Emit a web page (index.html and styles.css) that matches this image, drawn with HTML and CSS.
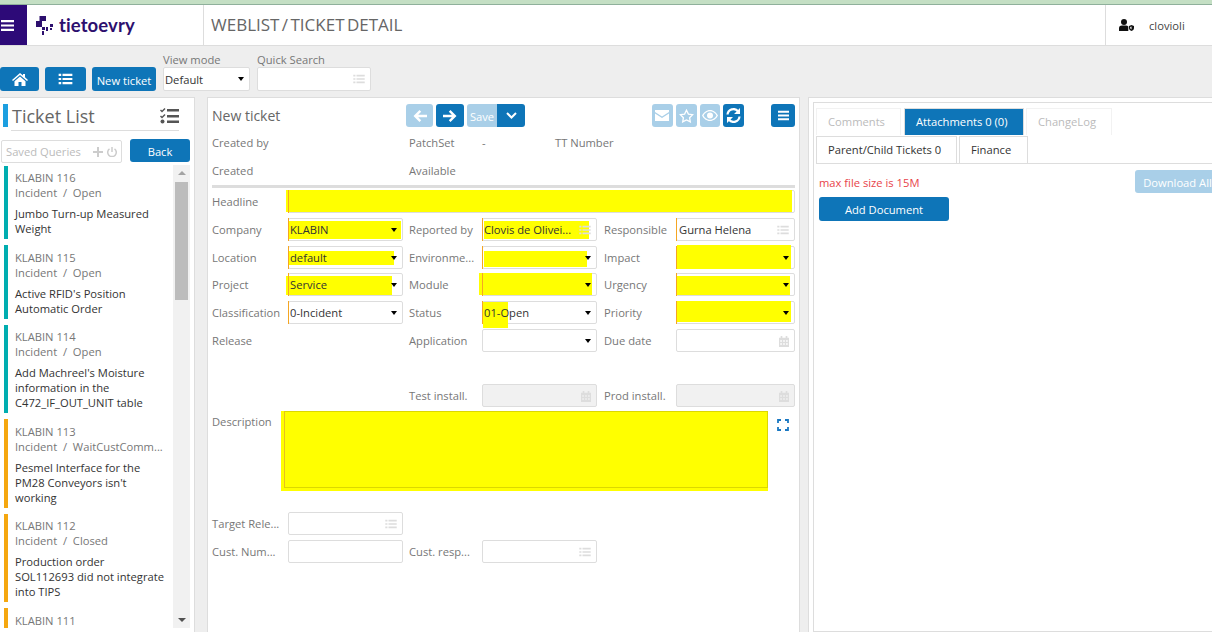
FILE: index.html
```html
<!DOCTYPE html>
<html>

<head>
  <title>Weblist - Ticket detail</title>
  <link rel="stylesheet" href="styles.css">
</head>

<body>
  <svg class="defs" width="0" height="0">
    <symbol id="i-bars" viewBox="0 0 16 14"><path d="M1 1h14v2.400H1zM1 5.800h14v2.400H1zM1 10.600h14V13H1z" fill="currentColor"/></symbol>
    <symbol id="i-list" viewBox="0 0 16 14"><path d="M0 1h3v2.400H0zM4.500 1H16v2.400H4.500zM0 5.800h3v2.400H0zM4.500 5.800H16v2.400H4.500zM0 10.600h3V13H0zM4.500 10.600H16V13H4.500z" fill="currentColor"/></symbol>
    <symbol id="i-cal" viewBox="0 0 12 13"><path d="M2 0h2v2h4V0h2v2h2v11H0V2h2zM1.500 5v1.800h2V5zM5 5v1.800h2V5zM8.500 5v1.800h2V5zM1.500 8.500v1.800h2V8.500zM5 8.500v1.800h2V8.500zM8.500 8.500v1.800h2V8.500z" fill="currentColor" fill-rule="evenodd"/></symbol>
  </svg>

  <div class="strip"></div>

  <header class="topbar">
    <div class="burger"><svg width="15" height="13"><use href="#i-bars"/></svg></div>
    <div class="logo">
      <svg width="17" height="19" viewBox="0 0 17 19">
        <path d="M3.500 0H10v5H6v6H0V5h3.500zM6 11h3v3H6zM6 15h2v4H6zM10 11h2v4h-2zM14 8h3v3h-3zM14 12h2v2h-2z" fill="#2d0f6e"/>
      </svg>
      <span class="logo-text">tietoevry</span>
    </div>
    <div class="page-title">WEBLIST / TICKET DETAIL</div>
    <div class="user">
      <svg width="15" height="12" viewBox="0 0 15 12">
        <circle cx="5" cy="3" r="3" fill="#111"/>
        <path d="M0 12V9c0-1.700 1.300-2.500 3-2.500h4c1 0 1.800.3 2.300.9V12z" fill="#111"/>
        <path d="M10 7l2.500-1L15 7v2c0 1.500-1.200 2.500-2.500 3C11.200 11.500 10 10.500 10 9z" fill="#111"/>
        <path d="M12.500 7.500v3c-.8-.4-1.300-1-1.300-1.700V8z" fill="#fff"/>
      </svg>
      <span>clovioli</span>
    </div>
  </header>

  <div class="toolbar">
    <button class="btn btn-home">
      <svg width="16" height="13" viewBox="0 0 16 13"><path d="M8 0l3 2.500V1h2v3.200L16 7l-1 1-7-6-7 6-1-1zM8 3.500l5.500 4.700V13H9.500V9h-3v4h-4V8.200z" fill="#fff"/></svg>
    </button>
    <button class="btn btn-list"><svg width="15" height="12"><use href="#i-list"/></svg></button>
    <button class="btn btn-new">New ticket</button>
    <div class="tool-field view-mode">
      <label>View mode</label>
      <div class="field">
        <span class="value">Default</span><i class="caret"></i>
      </div>
    </div>
    <div class="tool-field quick-search">
      <label>Quick Search</label>
      <div class="field"><svg class="field-icon" width="12" height="10"><use href="#i-list"/></svg></div>
    </div>
  </div>

  <main class="content">
    <aside class="list-panel">
      <div class="list-head">
        <h2>Ticket List</h2>
        <svg class="tasks-icon" width="19" height="16" viewBox="0 0 19 16">
          <path d="M0 2.500l1 -1 1 1L4.500 0l1 1L2 4.500zM0 8.500l1-1 1 1L4.500 6l1 1L2 10.500z" fill="#555"/>
          <circle cx="2.500" cy="13.500" r="2" fill="#555"/>
          <path d="M7 1h12v2.600H7zM7 7h12v2.600H7zM7 12.500h12v2.600H7z" fill="#555"/>
        </svg>
      </div>
      <div class="query-row">
        <div class="query-input">
          <span>Saved Queries</span>
          <svg width="24" height="10" viewBox="0 0 24 10">
            <path d="M0 4h4V0h2v4h4v2H6v4H4V6H0z" fill="#ccc"/>
            <path d="M19 0v5" stroke="#ccc" stroke-width="1.500"/>
            <path d="M16.500 1.800a4.300 4.300 0 1 0 5 0" fill="none" stroke="#ccc" stroke-width="1.500"/>
          </svg>
        </div>
        <button class="btn btn-back">Back</button>
      </div>
      <div class="list-body">
        <div class="tickets">
          <div class="ticket open">
            <div class="ticket-id">KLABIN 116</div>
            <div class="ticket-state">Incident &nbsp;/&nbsp; Open</div>
            <div class="ticket-text">Jumbo Turn-up Measured<br>Weight</div>
          </div>
          <div class="ticket open">
            <div class="ticket-id">KLABIN 115</div>
            <div class="ticket-state">Incident &nbsp;/&nbsp; Open</div>
            <div class="ticket-text">Active RFID's Position<br>Automatic Order</div>
          </div>
          <div class="ticket open">
            <div class="ticket-id">KLABIN 114</div>
            <div class="ticket-state">Incident &nbsp;/&nbsp; Open</div>
            <div class="ticket-text">Add Machreel's Moisture<br>information in the<br>C472_IF_OUT_UNIT table</div>
          </div>
          <div class="ticket waiting">
            <div class="ticket-id">KLABIN 113</div>
            <div class="ticket-state">Incident &nbsp;/&nbsp; WaitCustComm...</div>
            <div class="ticket-text">Pesmel Interface for the<br>PM28 Conveyors isn't<br>working</div>
          </div>
          <div class="ticket waiting">
            <div class="ticket-id">KLABIN 112</div>
            <div class="ticket-state">Incident &nbsp;/&nbsp; Closed</div>
            <div class="ticket-text">Production order<br>SOL112693 did not integrate<br>into TIPS</div>
          </div>
          <div class="ticket waiting">
            <div class="ticket-id">KLABIN 111</div>
          </div>
        </div>
        <div class="scrollbar">
          <i class="arrow-up"></i>
          <div class="thumb"></div>
          <i class="arrow-down"></i>
        </div>
      </div>
    </aside>

    <section class="detail-panel">
      <div class="detail-head">
        <h3>New ticket</h3>
        <div class="detail-nav">
          <button class="btn btn-back-nav light">
            <svg width="14" height="12" viewBox="0 0 14 12"><path d="M6.500 0l1.700 1.700L5.200 4.700H14v2.600H5.200l3 3L6.500 12 .5 6z" fill="#fff"/></svg>
          </button>
          <button class="btn btn-next-nav">
            <svg width="14" height="12" viewBox="0 0 14 12"><path d="M7.500 0L5.800 1.700l3 3H0v2.600h8.800l-3 3L7.500 12l6-6z" fill="#fff"/></svg>
          </button>
          <div class="save-group">
            <button class="btn btn-save light">Save</button>
            <button class="btn btn-drop">
              <svg width="11" height="7" viewBox="0 0 11 7"><path d="M1 1l4.500 4.500L10 1" fill="none" stroke="#fff" stroke-width="2"/></svg>
            </button>
          </div>
        </div>
        <div class="detail-actions">
          <button class="btn btn-act light">
            <svg width="14" height="11" viewBox="0 0 14 11"><path d="M0 0h14v2L7 6.500 0 2zM0 3.500L7 8l7-4.500V11H0z" fill="#fff"/></svg>
          </button>
          <button class="btn btn-act light">
            <svg width="15" height="14" viewBox="0 0 15 14"><path d="M7.500 1.200l1.900 3.900 4.200.6-3 3 .7 4.200-3.800-2-3.800 2 .7-4.200-3-3 4.200-.6z" fill="none" stroke="#fff" stroke-width="1.300"/></svg>
          </button>
          <button class="btn btn-act light">
            <svg width="16" height="11" viewBox="0 0 16 11"><path d="M8 0c3.500 0 6.500 2.500 8 5.500-1.500 3-4.500 5.500-8 5.500S1.500 8.500 0 5.500C1.500 2.500 4.500 0 8 0zm0 1.200c-2.800 0-5.200 1.900-6.500 4.300 1.300 2.400 3.700 4.300 6.500 4.300s5.200-1.900 6.500-4.300C13.200 3.100 10.800 1.200 8 1.200zM8 2.500a3 3 0 1 1 0 6 3 3 0 0 1 0-6z" fill="#fff"/></svg>
          </button>
          <button class="btn btn-act">
            <svg width="15" height="15" viewBox="0 0 15 15">
              <path d="M1.500 6.500A6 6 0 0 1 12 3.200" fill="none" stroke="#fff" stroke-width="2.200"/>
              <path d="M13.500 8.500A6 6 0 0 1 3 11.800" fill="none" stroke="#fff" stroke-width="2.200"/>
              <path d="M14 0v6H8zM1 15V9h6z" fill="#fff"/>
            </svg>
          </button>
          <button class="btn btn-menu"><svg width="13" height="11"><use href="#i-bars"/></svg></button>
        </div>
      </div>

      <div class="meta">
        <span>Created by</span><span></span><span>PatchSet</span><span>-</span><span>TT Number</span>
      </div>
      <div class="meta meta-last">
        <span>Created</span><span></span><span>Available</span>
      </div>
      <div class="rule"></div>

      <div class="form-grid">
        <label>Headline</label>
        <div class="field wide req"><span class="mark m-headline"></span></div>

        <label>Company</label>
        <div class="field req"><span class="mark m-company"></span><span class="value">KLABIN</span><i class="caret"></i></div>
        <label class="gap">Reported by</label>
        <div class="field req"><span class="mark m-reported"></span><span class="value">Clovis de Olivei...</span><svg class="field-icon" width="12" height="10"><use href="#i-list"/></svg></div>
        <label class="gap-last">Responsible</label>
        <div class="field req"><span class="value value-last">Gurna Helena</span><svg class="field-icon" width="12" height="10"><use href="#i-list"/></svg></div>

        <label>Location</label>
        <div class="field req"><span class="mark m-location"></span><span class="value">default</span><i class="caret"></i></div>
        <label class="gap">Environme...</label>
        <div class="field req"><span class="mark m-environment"></span><i class="caret"></i></div>
        <label class="gap-last">Impact</label>
        <div class="field req"><span class="mark m-impact"></span><i class="caret"></i></div>

        <label>Project</label>
        <div class="field req"><span class="mark m-project"></span><span class="value">Service</span><i class="caret"></i></div>
        <label class="gap">Module</label>
        <div class="field req"><span class="mark m-module"></span><i class="caret"></i></div>
        <label class="gap-last">Urgency</label>
        <div class="field req"><span class="mark m-urgency"></span><i class="caret"></i></div>

        <label>Classification</label>
        <div class="field req"><span class="value">0-Incident</span><i class="caret"></i></div>
        <label class="gap">Status</label>
        <div class="field req"><span class="mark m-status"></span><span class="value">01-Open</span><i class="caret"></i></div>
        <label class="gap-last">Priority</label>
        <div class="field req"><span class="mark m-priority"></span><i class="caret"></i></div>

        <label>Release</label>
        <div></div>
        <label class="gap">Application</label>
        <div class="field"><i class="caret"></i></div>
        <label class="gap-last">Due date</label>
        <div class="field"><svg class="field-icon" width="10" height="11"><use href="#i-cal"/></svg></div>

        <div class="spacer"></div>

        <div></div>
        <div></div>
        <label class="gap">Test install.</label>
        <div class="field off"><svg class="field-icon" width="10" height="11"><use href="#i-cal"/></svg></div>
        <label class="gap-last">Prod install.</label>
        <div class="field off"><svg class="field-icon" width="10" height="11"><use href="#i-cal"/></svg></div>
      </div>

      <div class="desc-row">
        <label>Description</label>
        <div class="desc-box"></div>
        <svg class="expand" width="12" height="12" viewBox="0 0 12 12">
          <path d="M1 4V1h3M8 1h3v3M11 8v3H8M4 11H1V8" fill="none" stroke="#1a78c2" stroke-width="1.800"/>
        </svg>
      </div>

      <div class="form-grid form-bottom">
        <label>Target Rele...</label>
        <div class="field"><svg class="field-icon" width="12" height="10"><use href="#i-list"/></svg></div>
        <div></div>
        <div></div>
        <div></div>
        <div></div>

        <label>Cust. Num...</label>
        <div class="field"></div>
        <label class="gap">Cust. resp...</label>
        <div class="field"><svg class="field-icon" width="12" height="10"><use href="#i-list"/></svg></div>
      </div>
    </section>

    <section class="side-panel">
      <div class="side-inner">
        <div class="tabs">
          <a class="tab muted t-comments">Comments</a>
          <a class="tab active t-attach">Attachments 0 (0)</a>
          <a class="tab muted t-log">ChangeLog</a>
        </div>
        <div class="tabs tabs-second">
          <a class="tab t-parent">Parent/Child Tickets 0</a>
          <a class="tab t-finance">Finance</a>
        </div>
        <div class="attach-head">
          <span class="max-size">max file size is 15M</span>
          <button class="btn btn-download light">Download All</button>
        </div>
        <button class="btn btn-add">Add Document</button>
      </div>
    </section>
  </main>
</body>

</html>
```

FILE: styles.css
```css
* {
  box-sizing: border-box;
}

html,
body {
  height: 632px;
  overflow: hidden;
}

body {
  margin: 0;
  display: flex;
  flex-direction: column;
  background: #eeeeee;
  color: #777;
  font-family: "Open Sans", sans-serif;
  font-size: 11.200px;
  line-height: 15px;
}

.defs {
  position: absolute;
}

label {
  display: block;
}

.strip {
  height: 5px;
  flex: none;
  background: #c4dfc4;
  border-bottom: 1px solid #8fb09b;
}

.topbar {
  height: 41px;
  flex: none;
  display: flex;
  background: #fff;
  border-bottom: 1px solid #ddd;
}

.burger {
  width: 27px;
  background: #2d0a78;
  color: #fff;
  display: flex;
  align-items: center;
}

.logo {
  width: 177px;
  display: flex;
  align-items: center;
  gap: 6px;
  padding-left: 9px;
  border-right: 1px solid #ddd;
}

.logo-text {
  color: #2d0f6e;
  font-family: "Lato", sans-serif;
  font-size: 18.500px;
  font-weight: 700;
  letter-spacing: 0.100px;
}

.page-title {
  flex: 1;
  padding-left: 7px;
  color: #666;
  font-size: 17px;
  line-height: 40px;
  word-spacing: -2px;
}

.user {
  width: 107px;
  display: flex;
  align-items: center;
  gap: 15px;
  padding-left: 13px;
  border-left: 1px solid #ddd;
  color: #444;
}

.toolbar {
  height: 51px;
  flex: none;
  display: flex;
  align-items: flex-end;
  padding-bottom: 6px;
}

.btn {
  border: 0;
  padding: 0;
  background: #0e75b8;
  color: #fff;
  font-family: "Open Sans", sans-serif;
  font-size: 11.200px;
  border-radius: 3px;
  display: flex;
  align-items: center;
  justify-content: center;
}

.btn.light {
  background: #a9cfe8;
}

.btn-home {
  width: 39px;
  height: 24px;
}

.btn-list {
  width: 41px;
  height: 24px;
  margin-left: 6px;
}

.btn-new {
  width: 64px;
  height: 24px;
  margin-left: 6px;
  padding-top: 3px;
}

.tool-field label {
  line-height: 14px;
}

.tool-field .field {
  line-height: 24px;
}

.view-mode {
  width: 87px;
  margin-left: 7px;
}

.quick-search {
  width: 114px;
  margin-left: 7px;
}

.field {
  position: relative;
  height: 24px;
  background: #fff;
  border: 1px solid #ddd;
  border-radius: 2px;
  color: #333;
  line-height: 22px;
}

/* mandatory fields get an orange edge, it stays visible over the marks */
.field.req::after {
  content: "";
  position: absolute;
  left: -1px;
  top: -1px;
  bottom: -1px;
  width: 1px;
  background: #f5a623;
}

.field.off {
  background: #f1f1f1;
}

.field.wide {
  grid-column: 2 / 7;
}

.value {
  position: relative;
  padding-left: 1px;
}

.value-last {
  padding-left: 2px;
}

.caret {
  position: absolute;
  right: 5px;
  top: 9px;
  border-left: 3px solid transparent;
  border-right: 3px solid transparent;
  border-top: 4px solid #000;
}

.field-icon {
  position: absolute;
  right: 5px;
  top: 6px;
  color: #ddd;
}

/* yellow marks somebody painted over the screenshot */
.mark {
  position: absolute;
  background: #ffff00;
}

.m-headline {
  left: -3px;
  right: 2px;
  top: -1px;
  bottom: 0;
}

.m-company {
  left: 0;
  right: 1px;
  top: 2px;
  bottom: 1px;
}

.m-location {
  left: 0;
  right: 8px;
  top: 4px;
  bottom: 3px;
}

.m-project {
  left: -3px;
  right: 10px;
  top: 2px;
  bottom: 0;
}

.m-reported {
  left: 1px;
  right: 7px;
  top: 2px;
  bottom: 1px;
}

.m-environment {
  left: 1px;
  right: 9px;
  top: 4px;
  bottom: 1px;
}

.m-module {
  left: -4px;
  right: 4px;
  top: -1px;
  bottom: 0;
}

.m-status {
  left: 0;
  width: 25px;
  top: 0;
  bottom: -5px;
}

.m-impact {
  left: 0;
  right: 3px;
  top: -2px;
  bottom: -1px;
}

.m-urgency {
  left: 0;
  right: 4px;
  top: 2px;
  bottom: 0;
}

.m-priority {
  left: 0;
  right: 3px;
  top: -1px;
  bottom: 1px;
}

.content {
  flex: 1;
  display: flex;
  min-height: 0;
}

.list-panel {
  width: 195px;
  flex: none;
  background: #fff;
  border-top: 1px solid #ddd;
  border-right: 1px solid #ddd;
  padding-top: 6px;
}

.list-head {
  position: relative;
  display: flex;
  justify-content: space-between;
  align-items: center;
  height: 23px;
  margin-left: 3px;
  margin-right: 15px;
  border-left: 5px solid #1c9fe0;
}

.list-head::after {
  content: "";
  position: absolute;
  left: 3px;
  right: 0;
  bottom: -4px;
  height: 1px;
  background: #ddd;
}

.list-head h2 {
  margin: 1px 0 0;
  padding-left: 4px;
  color: #666;
  font-size: 18px;
  font-weight: 400;
}

.tasks-icon {
  margin-top: 1px;
}

.query-row {
  display: flex;
  margin: 12px 0 0 1px;
}

.query-input {
  width: 121px;
  height: 23px;
  margin-top: 1px;
  padding: 0 4px;
  display: flex;
  justify-content: space-between;
  align-items: center;
  border: 1px solid #ddd;
  border-radius: 2px;
  color: #bbb;
}

.btn-back {
  width: 60px;
  height: 23px;
  margin-left: 8px;
  padding-top: 2px;
}

.list-body {
  display: flex;
  align-items: flex-start;
  margin-top: 2px;
}

.tickets {
  width: 173px;
  height: 463px;
  overflow: hidden;
  padding: 0.500px 0 0 4px;
}

.ticket {
  border-left: 4px solid #00adb0;
  padding: 4.500px 0 3px 7px;
  margin-bottom: 6px;
}

.ticket.waiting {
  border-left-color: #f5a70f;
}

.ticket-text {
  margin-top: 6px;
  color: #333;
  white-space: nowrap;
}

.scrollbar {
  position: relative;
  width: 17px;
  height: 463px;
  background: #f1f1f1;
  display: flex;
  flex-direction: column;
  align-items: center;
  padding-top: 6px;
}

.arrow-up {
  border-left: 4px solid transparent;
  border-right: 4px solid transparent;
  border-bottom: 4px solid #a3a3a3;
}

.thumb {
  width: 13px;
  height: 118px;
  margin-top: 7px;
  background: #bcbcbc;
}

.arrow-down {
  position: absolute;
  bottom: 6px;
  border-left: 4px solid transparent;
  border-right: 4px solid transparent;
  border-top: 4px solid #505050;
}

.detail-panel {
  width: 593px;
  flex: none;
  margin-left: 12px;
  padding: 0 4px;
  background: #fff;
  border: 1px solid #ddd;
  border-bottom: 0;
}

.detail-head {
  height: 35px;
  display: flex;
  align-items: flex-start;
  padding-top: 6px;
}

.detail-head h3 {
  width: 194px;
  flex: none;
  margin: 2px 0 0;
  color: #666;
  font-size: 14px;
  font-weight: 400;
  line-height: 20px;
}

.detail-nav {
  flex: none;
  display: flex;
}

.btn-back-nav {
  width: 27px;
  height: 23px;
  margin-right: 3px;
}

.btn-next-nav {
  width: 28px;
  height: 23px;
  margin-right: 3px;
}

.save-group {
  display: flex;
}

.btn-save {
  width: 30px;
  height: 23px;
  padding-top: 2px;
  border-radius: 3px 0 0 3px;
}

.btn-drop {
  width: 28px;
  height: 23px;
  border-radius: 0 3px 3px 0;
}

.detail-actions {
  flex: 1;
  display: flex;
  padding-left: 127px;
  gap: 3px;
}

.btn-act {
  width: 20.750px;
  height: 23px;
}

.btn-menu {
  width: 24px;
  height: 23px;
  margin-left: 24px;
}

.meta {
  display: grid;
  grid-template-columns: 76px 121px 73px 73px 1fr;
  height: 28px;
  line-height: 20px;
}

.meta-last {
  height: 24px;
}

.rule {
  height: 3px;
  background: #ddd;
}

.form-grid {
  display: grid;
  grid-template-columns: 76px 115px 79px 115px 79px 119px;
  grid-auto-rows: 23px;
  row-gap: 4.750px;
  margin-top: 2px;
  line-height: 23px;
}

.form-grid .field {
  height: 100%;
  line-height: 22px;
}

.gap {
  padding-left: 6px;
}

.gap-last {
  padding-left: 7px;
}

.spacer {
  grid-column: 1 / 7;
  height: 24.500px;
}

.desc-row {
  display: flex;
  height: 80px;
  margin-top: 3.500px;
}

.desc-row label {
  width: 69px;
  padding-top: 3px;
}

.desc-box {
  position: relative;
  width: 487px;
  background: #ffff00;
}

.desc-box::before {
  content: "";
  position: absolute;
  left: 3px;
  right: 0;
  top: 0;
  bottom: 3px;
  border: 1px solid #dcd800;
  border-left-color: #e8c020;
}

.expand {
  margin: 8px 0 0 9px;
}

.form-bottom {
  margin-top: 21.500px;
}

.side-panel {
  flex: 1;
  margin-left: 8px;
  padding: 4px 0 0 4px;
  background: #fff;
  border-top: 1px solid #ddd;
  border-left: 1px solid #ddd;
}

.side-inner {
  height: 530px;
  padding: 5px 0 0 2px;
  border: 1px solid #ddd;
  border-right: 0;
  overflow: hidden;
}

.tabs {
  display: flex;
}

.tabs-second {
  margin-top: 1px;
  border-bottom: 1px solid #ddd;
  height: 28px;
}

.tab {
  height: 27px;
  padding-left: 11px;
  line-height: 25px;
  color: #333;
  border: 1px solid #ddd;
  border-bottom: 0;
}

.tab.muted {
  color: #bbb;
  border-color: #f2f2f2;
}

.tab.active {
  background: #0e75b8;
  color: #fff;
  border-color: #ddd;
}

.t-comments {
  width: 85px;
}

.t-attach {
  width: 120px;
  margin-left: 3px;
}

.t-log {
  width: 86px;
  margin-left: 2px;
}

.t-parent {
  width: 141px;
}

.t-finance {
  width: 69px;
  margin-left: 2px;
}

.attach-head {
  display: flex;
  justify-content: space-between;
  margin: 6px 0 0 3px;
}

.max-size {
  color: #e8434a;
  line-height: 25px;
}

.btn-download {
  width: 85px;
  height: 23px;
  margin-right: -8px;
  padding-top: 1px;
  flex: none;
  white-space: nowrap;
}

.btn-add {
  width: 130px;
  height: 24px;
  margin: 2px 0 0 3px;
}
```
